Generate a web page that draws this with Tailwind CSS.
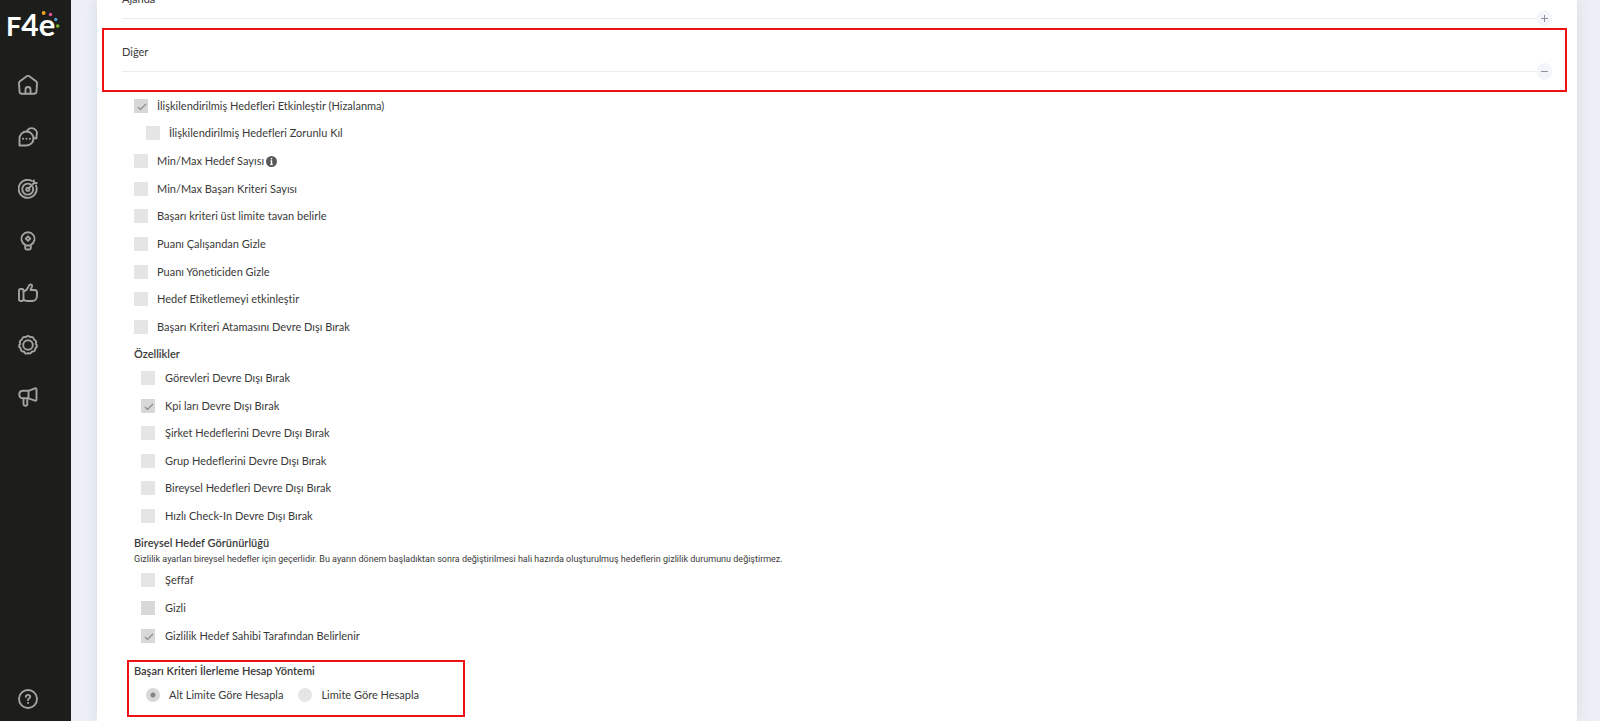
<!DOCTYPE html>
<html lang="tr">
	<head>
		<meta charset="UTF-8" />
		<meta name="viewport" content="width=device-width, initial-scale=1.0" />
		<title>F4e</title>
		<script src="https://cdn.jsdelivr.net/npm/@tailwindcss/browser@4"></script>
	</head>
	<body class="flex h-screen overflow-hidden bg-[#eceff5] font-['Lato','Noto_Sans',sans-serif] text-[11px] leading-[14px] text-[#3a3a3a] [font-variant-ligatures:none]">
		<!-- Sidebar -->
		<aside class="flex w-[71px] shrink-0 flex-col bg-[#1d1d1b] pt-2 pb-3 pl-2 text-[#a3a3a1]">
			<a href="#" aria-label="F4e" class="block">
				<svg class="h-8 w-[54px] overflow-visible" viewBox="0 0 54 32" fill="#fff" font-family="Lato, sans-serif" font-weight="700">
					<text x="-2" y="28"><tspan font-size="27">F</tspan><tspan font-size="30">4</tspan><tspan font-size="31">e</tspan></text>
					<circle cx="35.700" cy="5" r="1.900" fill="#f5a81c" />
					<circle cx="42.500" cy="6.500" r="1.700" fill="#e0559c" />
					<circle cx="47.700" cy="11.500" r="1.700" fill="#4b9fd5" />
					<circle cx="49.700" cy="18" r="1.800" fill="#76b82a" />
				</svg>
			</a>
			<nav class="mt-[35px] flex flex-col gap-8 pl-[10px]">
				<a href="#" aria-label="Ana sayfa">
					<svg class="size-5" viewBox="0 0 20 20" fill="none" stroke="currentColor" stroke-width="1.900" stroke-linejoin="round" stroke-linecap="round">
						<path d="M1 8.200Q1 7 2 6.200L8.700 1.300Q10 .500 11.300 1.300L18 6.200Q19 7 19 8.200L18.500 16.500Q18.300 18.800 16 18.800H4Q1.700 18.800 1.500 16.500Z" />
						<path d="M7.500 18.500V14.500a2.500 2.500 0 0 1 5 0V18.500" />
					</svg>
				</a>
				<a href="#" aria-label="Mesajlar">
					<svg class="size-5" viewBox="0 0 20 20" fill="none" stroke="currentColor" stroke-width="1.900" stroke-linejoin="round" stroke-linecap="round">
						<path d="M1.500 18.500V11.500A7 7 0 1 1 8.500 18.500Z" />
						<path d="M9 4.200A5.200 5.200 0 1 1 18.500 8.500V11.300H15.600" />
						<path d="M5 11.700h.1M8.400 11.700h.1M11.800 11.700h.1" />
					</svg>
				</a>
				<a href="#" aria-label="Hedefler">
					<svg class="size-5" viewBox="0 0 20 20" fill="none" stroke="currentColor" stroke-width="1.900" stroke-linejoin="round" stroke-linecap="round">
						<path d="M14 2A9 9 0 1 0 18 6.500" />
						<path d="M12.500 5.400A5.500 5.500 0 1 0 14.800 8" />
						<circle cx="9.800" cy="10.300" r="1.600" />
						<path d="M11 9 16 4M16 4V1.500M16 4H18.700" />
					</svg>
				</a>
				<a href="#" aria-label="Fikirler">
					<svg class="size-5" viewBox="0 0 20 20" fill="none" stroke="currentColor" stroke-width="1.900" stroke-linejoin="round" stroke-linecap="round">
						<path d="M7.200 13.800A6.600 6.600 0 1 1 12.800 13.800V17Q12.800 18.500 11.500 18.500H8.500Q7.200 18.500 7.200 17ZM7.200 14.500H12.800" />
						<path d="m10 5.300 2.300 2.300L10 9.900 7.700 7.600Z" />
					</svg>
				</a>
				<a href="#" aria-label="Takdir">
					<svg class="size-5" viewBox="0 0 20 20" fill="none" stroke="currentColor" stroke-width="1.900" stroke-linejoin="round" stroke-linecap="round">
						<rect x="1" y="6" width="4.500" height="12" rx="1.500" />
						<path d="M5.500 8.500Q9.500 7 10.500 3.500C11 1.500 12.500 1 14 2.300Q14.500 3 13.500 4.800L12.500 7H16.500Q19 7.200 19 9.500V13Q18.700 17.500 14.500 18H9Q7 18 5.500 16.500" />
					</svg>
				</a>
				<a href="#" aria-label="Rozetler">
					<svg class="size-5" viewBox="0 0 20 20" fill="none" stroke="currentColor" stroke-width="1.900" stroke-linejoin="round">
						<path d="M10 1Q11.500 1 12.300 2.200 13.700 1.600 14.900 2.400 16 3.200 16 4.600 17.500 5 18.100 6.300 18.500 7.700 17.700 8.900 19 9.800 18.900 11.200 18.600 12.700 17.300 13.200 17.500 14.800 16.600 15.800 15.500 16.800 14 16.500 13.300 18 11.800 18.500 10.700 18.700 10 18 9 18.900 7.600 18.500 6.400 18 6 16.500 4.500 16.800 3.400 15.800 2.500 14.800 2.700 13.200 1.400 12.700 1.100 11.200 1 9.800 2.300 8.900 1.500 7.700 1.900 6.300 2.500 5 4 4.600 4 3.200 5.100 2.400 6.300 1.600 7.700 2.200 8.500 1 10 1Z" />
						<circle cx="10" cy="10" r="4.800" />
					</svg>
				</a>
				<a href="#" aria-label="Duyurular">
					<svg class="size-5" viewBox="0 0 20 20" fill="none" stroke="currentColor" stroke-width="1.900" stroke-linejoin="round" stroke-linecap="round">
						<path d="M10.500 3.800H4.500Q1.300 4 1.300 7.500T4.500 11.300H10.500Z" />
						<path d="M10.500 3.800 17 1.400Q18.500 1 18.500 2.500V12.500Q18.500 14 17 13.600L10.500 11.300" />
						<path d="M5.500 11.500V17Q5.700 18.800 7.500 18.800T9.300 17V11.500" />
					</svg>
				</a>
			</nav>
			<a href="#" aria-label="Yardım" class="mt-auto pl-[10px]">
				<svg class="size-5" viewBox="0 0 20 20" fill="none" stroke="currentColor" stroke-width="1.900" stroke-linecap="round">
					<circle cx="10" cy="10" r="9" />
					<path d="M7.800 7.800Q8 5.900 10 5.900T12.200 7.800Q12.200 9 10.800 9.700 10 10.200 10 11.200M10 14h.1" />
				</svg>
			</a>
		</aside>

		<!-- Settings card -->
		<main class="flex-1 pr-[23px] pl-[26px]">
			<form class="flow-root min-h-full bg-white pr-[10px] pl-[5px] shadow-[0_0_12px_rgba(60,80,110,0.12)]">
				<section class="-mt-2 pr-[15px] pl-5">
					<h2>Ajanda</h2>
					<div class="mt-1 flex items-center">
						<hr class="flex-1 border-[#ededed]" />
						<button type="button" aria-label="Ajanda bölümünü aç" class="grid h-[17px] w-[15px] place-items-center rounded-full bg-[#f2f6fa] text-[#8e8e9c]">
							<svg class="size-[7px]" viewBox="0 0 7 7" stroke="currentColor"><path d="M0 3.500H7M3.500 0V7" /></svg>
						</button>
					</div>
				</section>

				<section class="mt-px border-2 border-[#ee1111] pt-[15px] pr-[13px] pb-[10px] pl-[18px]">
					<h2>Diğer</h2>
					<div class="mt-1 flex items-center">
						<hr class="flex-1 border-[#ededed]" />
						<button type="button" aria-label="Diğer bölümünü kapat" class="grid h-[17px] w-[15px] place-items-center rounded-full bg-[#f2f6fa] text-[#8e8e9c]">
							<svg class="size-[7px]" viewBox="0 0 7 7" stroke="currentColor"><path d="M0 3.500H7" /></svg>
						</button>
					</div>
				</section>

				<div class="flex flex-col gap-[13px] pt-[7px] pl-8">
					<label class="flex items-center gap-[9px]">
						<span class="grid size-[14px]">
							<input type="checkbox" checked disabled class="col-start-1 row-start-1 size-[14px] appearance-none bg-[#d8d8d8]" />
							<svg class="col-start-1 row-start-1 size-[14px]" viewBox="0 0 14 14" fill="none" stroke="#8c8c8c" stroke-width="1.200"><path d="m4 8 2.500 2.500L12 5" /></svg>
						</span>
						İlişkilendirilmiş Hedefleri Etkinleştir (Hizalanma)
					</label>
					<div class="flex flex-col gap-[14px]">
						<label class="ml-3 flex items-center gap-[9px]">
							<input type="checkbox" disabled class="size-[14px] appearance-none bg-[#e5e5e5]" />
							İlişkilendirilmiş Hedefleri Zorunlu Kıl
						</label>
						<label class="flex items-center gap-[9px]">
							<input type="checkbox" disabled class="size-[14px] appearance-none bg-[#e5e5e5]" />
							<span class="flex items-center gap-[2px]">
								Min/Max Hedef Sayısı
								<svg class="size-[11px]" viewBox="0 0 11 11"><circle cx="5.500" cy="5.500" r="5.500" fill="#595959" /><path d="M5.500 2V3.500M4.500 5H5.500V8M4.200 8.300H6.800" fill="none" stroke="#fff" stroke-width="1.300" /></svg>
							</span>
						</label>
						<label class="flex items-center gap-[9px]">
							<input type="checkbox" disabled class="size-[14px] appearance-none bg-[#e5e5e5]" />
							Min/Max Başarı Kriteri Sayısı
						</label>
					</div>
					<div class="flex flex-col gap-[14px]">
						<label class="flex items-center gap-[9px]">
							<input type="checkbox" disabled class="size-[14px] appearance-none bg-[#e5e5e5]" />
							Başarı kriteri üst limite tavan belirle
						</label>
						<label class="flex items-center gap-[9px]">
							<input type="checkbox" disabled class="size-[14px] appearance-none bg-[#e5e5e5]" />
							Puanı Çalışandan Gizle
						</label>
						<label class="flex items-center gap-[9px]">
							<input type="checkbox" disabled class="size-[14px] appearance-none bg-[#e5e5e5]" />
							Puanı Yöneticiden Gizle
						</label>
					</div>
					<div class="flex flex-col gap-[14px]">
						<label class="flex items-center gap-[9px]">
							<input type="checkbox" disabled class="size-[14px] appearance-none bg-[#e5e5e5]" />
							Hedef Etiketlemeyi etkinleştir
						</label>
						<label class="flex items-center gap-[9px]">
							<input type="checkbox" disabled class="size-[14px] appearance-none bg-[#e5e5e5]" />
							Başarı Kriteri Atamasını Devre Dışı Bırak
						</label>
					</div>
				</div>

				<fieldset class="pt-[13px] pl-8">
					<legend class="contents font-semibold">Özellikler</legend>
					<div class="flex flex-col gap-[13px] pt-[10px] pl-[7px]">
						<div class="flex flex-col gap-[14px]">
							<label class="flex items-center gap-[10px]">
								<input type="checkbox" disabled class="size-[14px] appearance-none bg-[#e5e5e5]" />
								Görevleri Devre Dışı Bırak
							</label>
							<label class="flex items-center gap-[10px]">
								<span class="grid size-[14px]">
									<input type="checkbox" checked disabled class="col-start-1 row-start-1 size-[14px] appearance-none bg-[#d8d8d8]" />
									<svg class="col-start-1 row-start-1 size-[14px]" viewBox="0 0 14 14" fill="none" stroke="#8c8c8c" stroke-width="1.200"><path d="m4 8 2.500 2.500L12 5" /></svg>
								</span>
								Kpi ları Devre Dışı Bırak
							</label>
						</div>
						<div class="flex flex-col gap-[14px]">
							<label class="flex items-center gap-[10px]">
								<input type="checkbox" disabled class="size-[14px] appearance-none bg-[#e5e5e5]" />
								Şirket Hedeflerini Devre Dışı Bırak
							</label>
							<label class="flex items-center gap-[10px]">
								<input type="checkbox" disabled class="size-[14px] appearance-none bg-[#e5e5e5]" />
								Grup Hedeflerini Devre Dışı Bırak
							</label>
						</div>
						<div class="flex flex-col gap-[14px]">
							<label class="flex items-center gap-[10px]">
								<input type="checkbox" disabled class="size-[14px] appearance-none bg-[#e5e5e5]" />
								Bireysel Hedefleri Devre Dışı Bırak
							</label>
							<label class="flex items-center gap-[10px]">
								<input type="checkbox" disabled class="size-[14px] appearance-none bg-[#e5e5e5]" />
								Hızlı Check-In Devre Dışı Bırak
							</label>
						</div>
					</div>
				</fieldset>

				<fieldset class="pt-[13px] pl-8">
					<legend class="contents font-semibold">Bireysel Hedef Görünürlüğü</legend>
					<p class="pt-[2px] font-['Roboto',sans-serif] text-[9px]">Gizlilik ayarları bireysel hedefler için geçerlidir. Bu ayarın dönem başladıktan sonra değiştirilmesi hali hazırda oluşturulmuş hedeflerin gizlilik durumunu değiştirmez.</p>
					<div class="flex flex-col gap-[14px] pt-[7px] pl-[7px]">
						<label class="flex items-center gap-[10px]">
							<input type="checkbox" disabled class="size-[14px] appearance-none bg-[#e5e5e5]" />
							Şeffaf
						</label>
						<label class="flex items-center gap-[10px]">
							<input type="checkbox" disabled class="size-[14px] appearance-none bg-[#d8d8d8]" />
							Gizli
						</label>
						<label class="flex items-center gap-[10px]">
							<span class="grid size-[14px]">
								<input type="checkbox" checked disabled class="col-start-1 row-start-1 size-[14px] appearance-none bg-[#d8d8d8]" />
								<svg class="col-start-1 row-start-1 size-[14px]" viewBox="0 0 14 14" fill="none" stroke="#8c8c8c" stroke-width="1.200"><path d="m4 8 2.500 2.500L12 5" /></svg>
							</span>
							Gizlilik Hedef Sahibi Tarafından Belirlenir
						</label>
					</div>
				</fieldset>

				<fieldset class="mt-[17px] ml-[25px] w-[338px] border-2 border-[#ee1111] pt-[2px] pb-[13px] pl-[5px]">
					<legend class="contents font-semibold">Başarı Kriteri İlerleme Hesap Yöntemi</legend>
					<div class="flex gap-[15px] pt-[10px] pl-3">
						<label class="flex items-center gap-[9px]">
							<input type="radio" name="hesap" checked disabled class="size-[14px] appearance-none rounded-full bg-[#d8d8d8] bg-[radial-gradient(circle,#858585_2px,transparent_3px)]" />
							Alt Limite Göre Hesapla
						</label>
						<label class="flex items-center gap-[9px]">
							<input type="radio" name="hesap" disabled class="size-[14px] appearance-none rounded-full bg-[#e5e5e5]" />
							Limite Göre Hesapla
						</label>
					</div>
				</fieldset>
			</form>
		</main>
	</body>
</html>
